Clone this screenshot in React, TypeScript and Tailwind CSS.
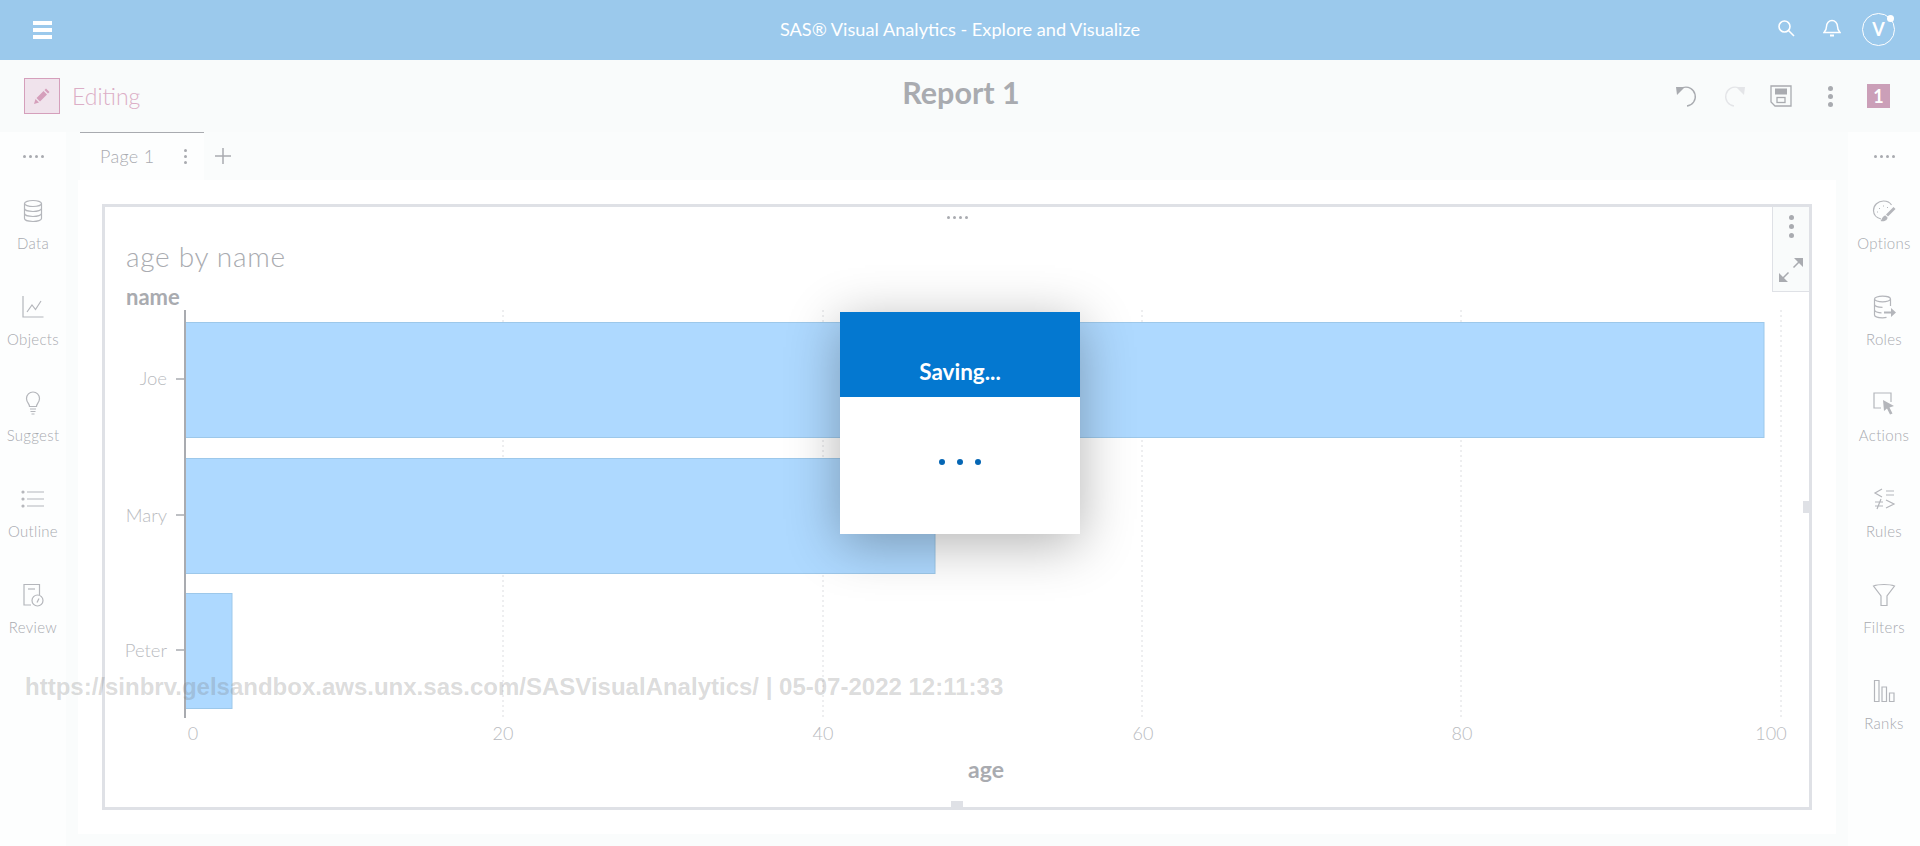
import type { ReactNode } from 'react';

const iconStroke = '#b4b6bb';

function RailIcon({ children }: { children: ReactNode }) {
  return (
    <svg width="24" height="24" viewBox="0 0 24 24" fill="none" stroke={iconStroke} strokeWidth="1.2">
      {children}
    </svg>
  );
}

const leftItems: { label: string; icon: ReactNode }[] = [
  {
    label: 'Data',
    icon: (
      <>
        <ellipse cx="12" cy="4.5" rx="8.5" ry="3" />
        <path d="M3.5 4.5v15c0 1.7 3.8 3 8.5 3s8.5-1.3 8.5-3v-15" />
        <path d="M3.5 9.5c0 1.7 3.8 3 8.5 3s8.5-1.3 8.5-3M3.5 14.5c0 1.7 3.8 3 8.5 3s8.5-1.3 8.5-3" />
      </>
    ),
  },
  {
    label: 'Objects',
    icon: (
      <>
        <path d="M2 1v21h20.500" />
        <path d="M6 17l5-7 3.500 4.500L20 6" />
      </>
    ),
  },
  {
    label: 'Suggest',
    icon: (
      <>
        <path d="M8.500 15.500c0-3-3-4-3-8a6.500 6.500 0 0 1 13 0c0 4-3 5-3 8z" />
        <path d="M9 18h6M9.500 20.500h5M10.500 23h3" />
      </>
    ),
  },
  {
    label: 'Outline',
    icon: (
      <>
        <path d="M6 5h17M6 12h17M6 19h17" />
        <circle cx="2" cy="5" r="1" fill={iconStroke} />
        <circle cx="2" cy="12" r="1" fill={iconStroke} />
        <circle cx="2" cy="19" r="1" fill={iconStroke} />
      </>
    ),
  },
  {
    label: 'Review',
    icon: (
      <>
        <path d="M10 22H3V1.500h15.500V12" />
        <path d="M7 6h7" />
        <circle cx="16.500" cy="17.500" r="5.500" />
        <path d="M16 19.500l2-4" />
      </>
    ),
  },
];

const rightItems: { label: string; icon: ReactNode }[] = [
  {
    label: 'Options',
    icon: (
      <>
        <path d="M9 20C4.500 19 1.500 15.500 1.500 11.500 1.500 6 6 2 11.500 2c3.500 0 6.500 1.500 8 4" />
        <path d="M7 9.500h1M11 7h1M15 8.500h1M5 13h1" strokeWidth="1" />
        <path d="M14 15.500L21.500 8l2 2-7.500 7.500z" fill={iconStroke} stroke="none" />
        <path d="M8.500 22c1.500-1 1.500-5 5-5.500l2 2c.2 2.500-3 4.500-7 3.500z" fill={iconStroke} stroke="none" />
      </>
    ),
  },
  {
    label: 'Roles',
    icon: (
      <>
        <ellipse cx="10.500" cy="4" rx="8" ry="2.800" />
        <path d="M2.500 4v16c0 1.500 3.500 2.800 8 2.800 1.500 0 3-.1 4-.4M18.500 4v7" />
        <path d="M2.500 9.500c0 1.500 3.500 2.800 8 2.800M2.500 15c0 1.500 3.500 2.800 7 2.800" />
        <path d="M12 16.500h7V13l5 4.500-5 4.500v-3.500h-7z" fill={iconStroke} stroke="none" />
      </>
    ),
  },
  {
    label: 'Actions',
    icon: (
      <>
        <path d="M9 17H2V2h17v9" />
        <path d="M11 9l11 6-4.500 1.500 3 6-2.500 1-3-6L12 20z" fill={iconStroke} stroke="none" />
      </>
    ),
  },
  {
    label: 'Rules',
    icon: (
      <>
        <path d="M10 2L3 6l7 4M14 4h8M14 8h8M3 15h8M3 19h8M9 12l-4 10M14 13l8 4-8 4" />
      </>
    ),
  },
  {
    label: 'Filters',
    icon: <path d="M1.500 3c5-2 16-2 21 0L15 13v9.500H9V13z" />,
  },
  {
    label: 'Ranks',
    icon: (
      <>
        <path d="M2.500 1.500h4.500v21H2.500zM10 8h4.500v14.500H10zM17.500 14H22v8.500h-4.500z" />
      </>
    ),
  },
];

function Rail({ items, className }: { items: { label: string; icon: ReactNode }[]; className: string }) {
  return (
    <div className={`flex flex-col items-center bg-[#fdfefe] ${className}`}>
      <div className="flex h-[48px] items-center gap-[3px]">
        {[0, 1, 2, 3].map((i) => (
          <span key={i} className="h-[3px] w-[3px] rounded-full bg-[#a9abb0]" />
        ))}
      </div>
      <div className="mt-[19px] flex flex-col">
        {items.map((item) => (
          <div key={item.label} className="flex h-[96px] flex-col items-center">
            <RailIcon>{item.icon}</RailIcon>
            <span className="mt-[12px] text-[15px] leading-[16px] font-light tracking-[0.3px] text-[#a8aab0]">
              {item.label}
            </span>
          </div>
        ))}
      </div>
    </div>
  );
}

function TopBar() {
  return (
    <div className="flex h-[60px] shrink-0 items-center bg-[#9bc9ec] pr-[25px] pl-[33px] text-white">
      <div className="flex w-[19px] flex-col gap-[3px]">
        <span className="h-[4px] bg-white" />
        <span className="h-[4px] bg-white" />
        <span className="h-[4px] bg-white" />
      </div>
      <div className="flex-1 pl-[91px] text-center text-[18.200px]">SAS® Visual Analytics - Explore and Visualize</div>
      <svg width="18" height="18" viewBox="0 0 18 18" fill="none" stroke="white" strokeWidth="1.600" className="mb-[4px]">
        <circle cx="7.500" cy="7.500" r="5.500" />
        <path d="M11.500 11.500L17 17" />
      </svg>
      <svg width="18" height="18" viewBox="0 0 18 18" fill="none" stroke="white" strokeWidth="1.500" className="mb-[4px] ml-[28px]">
        <path d="M1 13.500h16c-1.500-1.500-2.500-2.500-2.500-6 0-3.500-2.500-6-5.500-6s-5.500 2.500-5.500 6c0 3.500-1 4.500-2.500 6z" />
        <path d="M7 16.500h4" strokeWidth="2" />
      </svg>
      <div className="relative mb-[1px] ml-[21px] flex h-[33px] w-[33px] items-center justify-center rounded-full border border-white text-[18px] font-bold">
        V
        <span className="absolute top-[1px] right-[0px] h-[7px] w-[7px] rounded-full bg-white" />
      </div>
    </div>
  );
}

function Toolbar() {
  return (
    <div className="flex h-[72px] shrink-0 items-center bg-[#f9fbfb] pr-[30px] pl-[24px]">
      <div className="flex h-[36px] w-[36px] items-center justify-center border border-[#d59fbb] bg-[#f0e3ec]">
        <svg width="18" height="18" viewBox="0 0 18 18" fill="#d59fbb">
          <path d="M1 17l1.500-5 3.500 3.500zM3.500 11l7-7 3.500 3.500-7 7zM11.500 3l1.500-1.500 3.500 3.500L15 6.500z" />
        </svg>
      </div>
      <span className="ml-[12px] w-[301px] text-[23px] font-light text-[#dcaec6]">Editing</span>
      <div className="mb-[6px] flex-1 pr-[123px] text-center text-[30.500px] font-bold text-[#a9abb0]">Report 1</div>
      <svg width="24" height="24" viewBox="0 0 24 24" fill="none" stroke="#a9abb0" strokeWidth="1.300" className="ml-[3px]">
        <path d="M8 3.500A9.500 9.500 0 1 1 12 22" />
        <path d="M1 3h9l-8 8z" fill="#a9abb0" stroke="none" />
      </svg>
      <svg width="24" height="24" viewBox="0 0 24 24" fill="none" stroke="#e4e5e8" strokeWidth="1.300" className="ml-[23px]">
        <path d="M16 3.500A9.500 9.500 0 1 0 12 22" />
        <path d="M23 3h-9l8 8z" fill="#e4e5e8" stroke="none" />
      </svg>
      <svg width="22" height="22" viewBox="0 0 22 22" fill="none" stroke="#a9abb0" strokeWidth="1.300" className="ml-[24px]">
        <path d="M1 1h20v20H5l-4-4z" />
        <rect x="5" y="3.500" width="12" height="6" fill="#a9abb0" stroke="none" />
        <rect x="7" y="12.500" width="8" height="5" />
      </svg>
      <div className="ml-[36px] flex flex-col gap-[3px]">
        <span className="h-[5px] w-[5px] rounded-full bg-[#a9abb0]" />
        <span className="h-[5px] w-[5px] rounded-full bg-[#a9abb0]" />
        <span className="h-[5px] w-[5px] rounded-full bg-[#a9abb0]" />
      </div>
      <div className="ml-[34px] flex h-[24px] w-[23px] items-center justify-center bg-[#cb9fb8] text-[18px] font-bold text-white">
        1
      </div>
    </div>
  );
}

const gridX = [503, 823, 1142, 1461, 1781];
const ticks = [
  { x: 193, label: '0' },
  { x: 503, label: '20' },
  { x: 823, label: '40' },
  { x: 1143, label: '60' },
  { x: 1462, label: '80' },
  { x: 1771, label: '100' },
];
const bars = [
  { name: 'Joe', y: 322, end: 1764, textY: 386 },
  { name: 'Mary', y: 458, end: 935, textY: 523 },
  { name: 'Peter', y: 593, end: 232, textY: 658 },
];

function BarChart() {
  return (
    <svg viewBox="105 307 1704 500" className="h-[500px] w-full" style={{ fontFamily: 'Lato, sans-serif' }}>
      {gridX.map((x) => (
        <line key={x} x1={x} x2={x} y1={310} y2={718} stroke="#dcdde0" strokeDasharray="2 3" />
      ))}
      {bars.map((bar) => (
        <g key={bar.name}>
          <rect
            x={185}
            y={bar.y + 0.5}
            width={bar.end - 185}
            height={115}
            fill="#aed9ff"
            stroke="#9dc8ea"
          />
          <line x1={176} x2={185} y1={bar.y + 57} y2={bar.y + 57} stroke="#a9abb0" strokeWidth="1.500" />
          <text x={167} y={bar.textY - 1} textAnchor="end" fontSize="18.500" fontWeight="300" fill="#b9bbc0">
            {bar.name}
          </text>
        </g>
      ))}
      <line x1={185} x2={185} y1={310} y2={718} stroke="#a9abb0" strokeWidth="2" />
      {ticks.map((tick) => (
        <text key={tick.label} x={tick.x} y={740} textAnchor="middle" fontSize="18" fontWeight="300" fill="#b9bbc0">
          {tick.label}
        </text>
      ))}
      <text x={986} y={778} textAnchor="middle" fontSize="23" fontWeight="700" fill="#a9abb0">
        age
      </text>
    </svg>
  );
}

function ChartCard() {
  return (
    <div className="relative m-[24px] flex-1 border-[3px] border-[#dfe1e6] bg-white">
      <div className="mt-[35px] pl-[21px] text-[28px] leading-[28px] font-light tracking-[0.7px] text-[#a9abb0]">age by name</div>
      <div className="mt-[17px] pl-[21px] text-[22px] leading-[20px] font-bold text-[#a9abb0]">name</div>
      <BarChart />

      {/* Card resize and menu affordances */}
      <div className="absolute top-[9px] left-[842px] flex gap-[3px]">
        {[0, 1, 2, 3].map((i) => (
          <span key={i} className="h-[3px] w-[3px] rounded-full bg-[#a9abb0]" />
        ))}
      </div>
      <div className="absolute top-0 right-0 flex h-[85px] w-[37px] flex-col items-center border-b border-l border-[#dfe1e6] bg-[#f9fbfb] pt-[8px]">
        <span className="h-[5px] w-[5px] rounded-full bg-[#a9abb0]" />
        <span className="mt-[4px] h-[5px] w-[5px] rounded-full bg-[#a9abb0]" />
        <span className="mt-[4px] h-[5px] w-[5px] rounded-full bg-[#a9abb0]" />
        <svg width="24" height="24" viewBox="0 0 24 24" fill="none" stroke="#a9abb0" strokeWidth="1.500" className="mt-[20px]">
          <path d="M14.500 9.500L21 3M9.500 14.500L3 21" />
          <path d="M15 0h9v9zM0 15v9h9z" fill="#a9abb0" stroke="none" />
        </svg>
      </div>
      <span className="absolute top-[294px] right-0 h-[12px] w-[6px] bg-[#dfe1e6]" />
      <span className="absolute bottom-0 left-[846px] h-[6px] w-[12px] bg-[#dfe1e6]" />
    </div>
  );
}

export default function App() {
  return (
    <div className="relative flex h-[846px] w-[1920px] flex-col overflow-hidden bg-[#fafcfc] [font-family:Lato,sans-serif]">
      <TopBar />
      <Toolbar />
      <div className="flex min-h-0 flex-1">
        <Rail items={leftItems} className="w-[66px]" />
        <div className="ml-[12px] flex min-w-0 flex-1 flex-col pb-[12px]">
          <div className="flex h-[48px] shrink-0 items-center">
            <div className="ml-[2px] flex h-full w-[124px] items-center border-t border-[#a9abb0] bg-[#fdfefe] pl-[20px]">
              <span className="w-[84px] text-[18px] font-light tracking-[0.3px] text-[#a9abb0]">Page 1</span>
              <div className="flex flex-col gap-[3px]">
                <span className="h-[3px] w-[3px] rounded-full bg-[#a9abb0]" />
                <span className="h-[3px] w-[3px] rounded-full bg-[#a9abb0]" />
                <span className="h-[3px] w-[3px] rounded-full bg-[#a9abb0]" />
              </div>
            </div>
            <svg width="16" height="16" viewBox="0 0 16 16" stroke="#a9abb0" strokeWidth="1.500" className="ml-[11px]">
              <path d="M8 0v16M0 8h16" />
            </svg>
          </div>
          <div className="flex min-h-0 flex-1 bg-white">
            <ChartCard />
          </div>
        </div>
        <Rail items={rightItems} className="ml-[12px] w-[72px]" />
      </div>

      {/* Browser capture stamp */}
      <div className="absolute top-[672px] left-[25px] text-[24px] leading-[30px] font-bold whitespace-nowrap text-[rgba(120,120,120,0.27)] [font-family:'Liberation_Sans',sans-serif]">
        https://sinbrv.gelsandbox.aws.unx.sas.com/SASVisualAnalytics/ | 05-07-2022 12:11:33
      </div>

      {/* Saving dialog */}
      <div className="absolute top-[312px] left-[840px] flex h-[222px] w-[240px] flex-col bg-white shadow-[0_10px_50px_rgba(0,0,0,0.3)]">
        <div className="flex h-[85px] items-end justify-center bg-[#0478d0] pb-[13px] text-[22.500px] leading-[24px] font-bold text-white">
          Saving...
        </div>
        <div className="flex flex-1 items-center justify-center gap-[12px] pb-[7px]">
          <span className="h-[6px] w-[6px] rounded-full bg-[#0566b4]" />
          <span className="h-[6px] w-[6px] rounded-full bg-[#0566b4]" />
          <span className="h-[6px] w-[6px] rounded-full bg-[#0566b4]" />
        </div>
      </div>
    </div>
  );
}
